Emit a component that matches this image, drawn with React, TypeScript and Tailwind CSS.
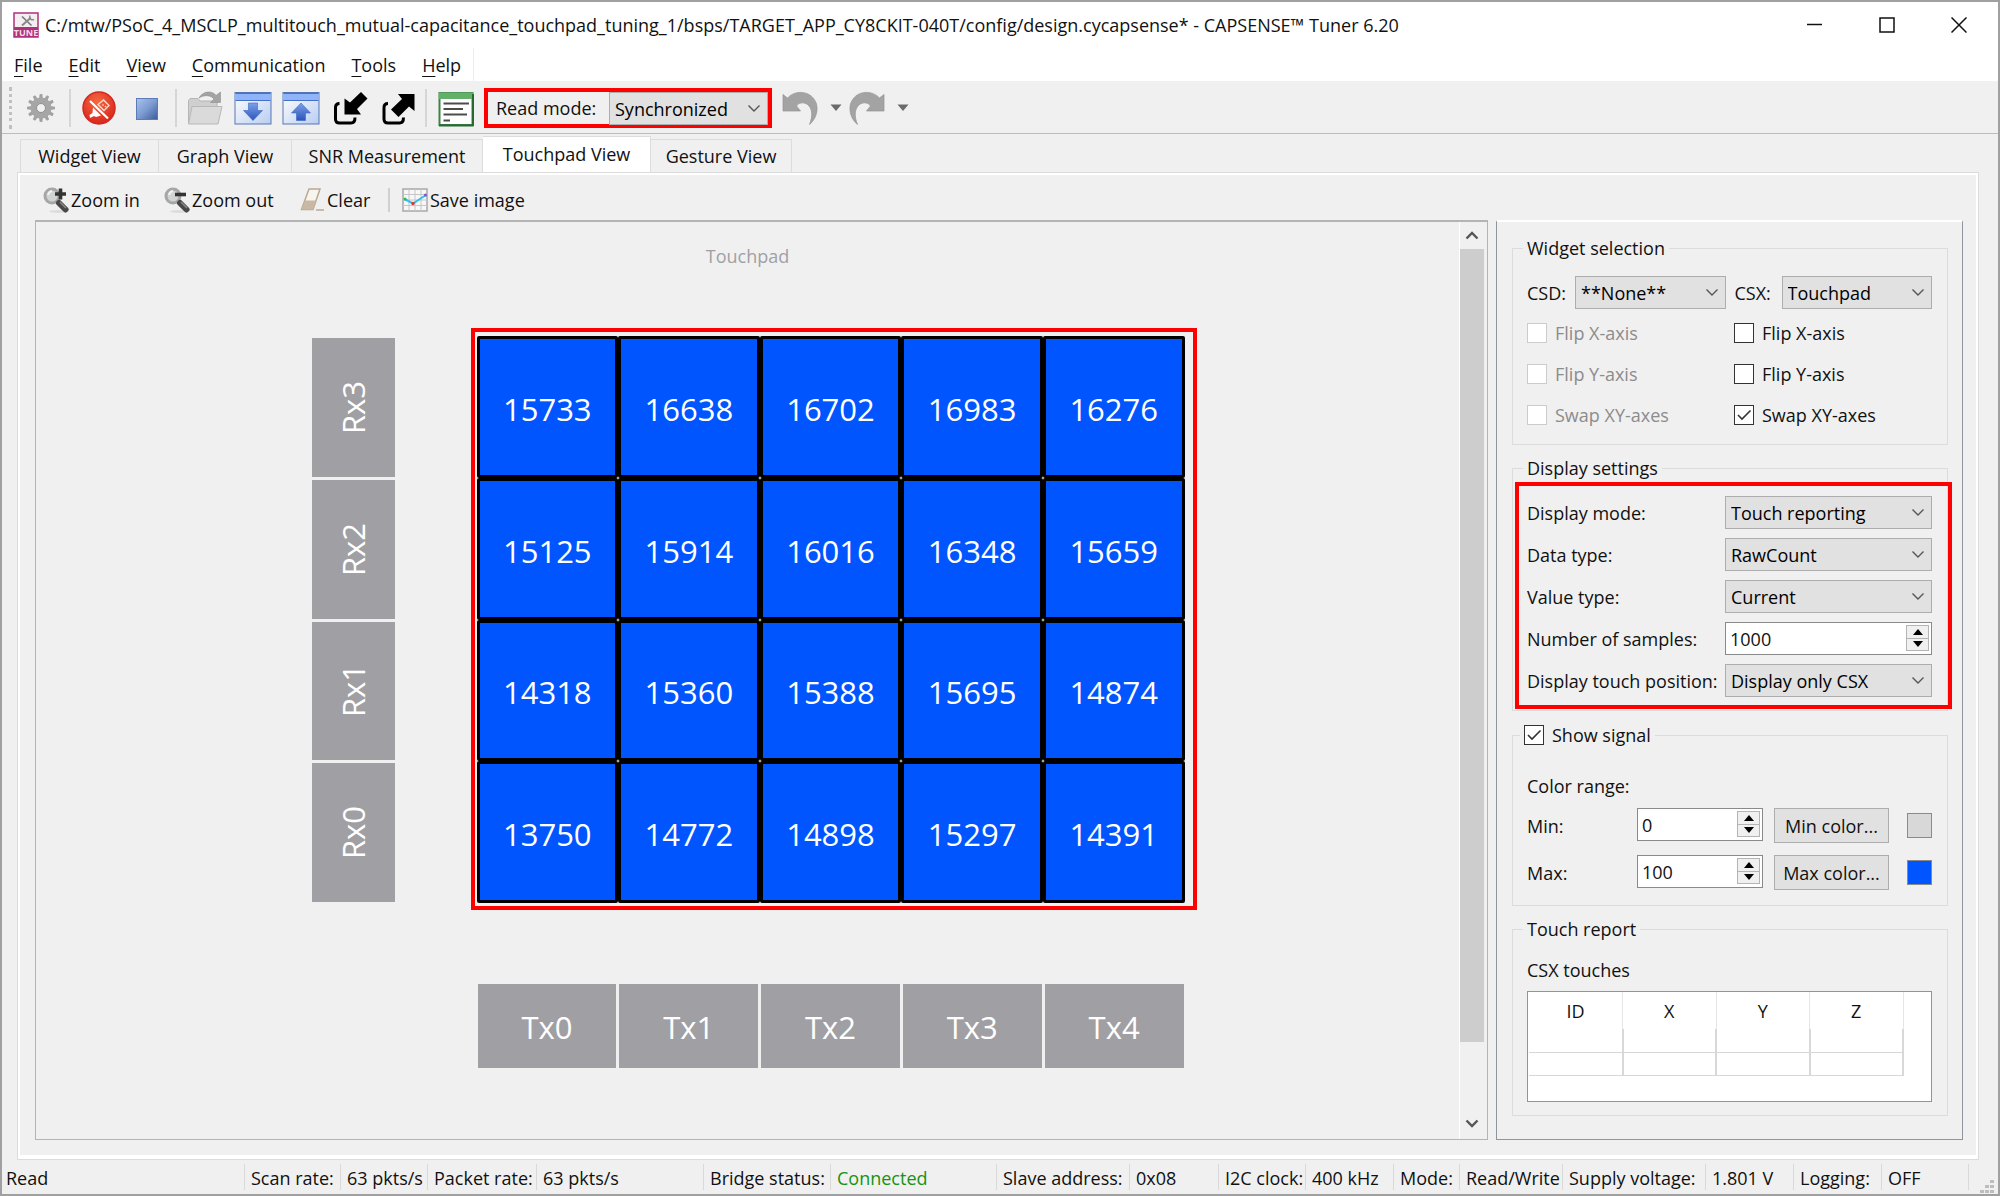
import React from "react";
import { clsx } from "clsx";

const rows = [
  { label: "Rx3", values: [15733, 16638, 16702, 16983, 16276] },
  { label: "Rx2", values: [15125, 15914, 16016, 16348, 15659] },
  { label: "Rx1", values: [14318, 15360, 15388, 15695, 14874] },
  { label: "Rx0", values: [13750, 14772, 14898, 15297, 14391] },
];
const columns = ["Tx0", "Tx1", "Tx2", "Tx3", "Tx4"];

/* ---------- icons ---------- */

function TuneLogo() {
  return (
    <svg width="26" height="26" viewBox="0 0 26 26" aria-hidden="true">
      <rect x="1" y="1" width="24" height="24" fill="#f4eef2" stroke="#b0307c" strokeWidth="1.5" />
      <path d="M9 4.500 18.500 13.500" stroke="#777" strokeWidth="1.600" fill="none" />
      <path d="M17.500 6 9 13.500" stroke="#888" strokeWidth="2" fill="none" />
      <path d="M17 3.500a3 3 0 0 0 4 4" stroke="#888" strokeWidth="1.500" fill="none" />
      <rect x="1" y="15" width="24" height="10" fill="#b0307c" />
      <text x="13" y="23.500" textAnchor="middle" fontSize="9" fontWeight="700" fill="#f6dcea" fontFamily="Open Sans, sans-serif">
        TUNE
      </text>
    </svg>
  );
}

function GearIcon() {
  const teeth = Array.from({ length: 12 }, (_, i) => i * 30);
  return (
    <svg width="38" height="38" viewBox="0 0 38 38" aria-hidden="true">
      <g fill="#a2a2a2">
        {teeth.map((a) => (
          <path key={a} d="M17 10 17.700 5h2.600L21 10z" transform={`rotate(${a} 19 19)`} />
        ))}
      </g>
      <circle cx="19" cy="19" r="7.500" fill="none" stroke="#a6a6a6" strokeWidth="6" />
      <circle cx="19" cy="19" r="4.500" fill="none" stroke="#8f8f8f" strokeWidth="1" />
    </svg>
  );
}

function DisconnectIcon() {
  return (
    <svg width="38" height="38" viewBox="0 0 38 38" aria-hidden="true">
      <defs>
        <radialGradient id="redBall" cx="0.45" cy="0.3" r="0.75">
          <stop offset="0" stopColor="#f4693f" />
          <stop offset="1" stopColor="#d8201a" />
        </radialGradient>
      </defs>
      <circle cx="19" cy="19" r="16" fill="url(#redBall)" stroke="#cf2a1e" strokeWidth="1.500" />
      <path d="M10 12 28 29.500" stroke="#fff" strokeWidth="2.200" />
      <path d="M13 18.500 21 26.500 16 28l-2-1-4 2-.5-3 3-2z" fill="#fff" />
      <path d="M18 15.500 23.500 11 29 16.500 24 21.500z" fill="none" stroke="#ffd5c8" strokeWidth="1.500" />
      <path d="M22.500 15.500l1 1M25 17l1 1" stroke="#ffd5c8" strokeWidth="1.500" />
    </svg>
  );
}

function StopIcon() {
  return (
    <svg width="38" height="38" viewBox="0 0 38 38" aria-hidden="true">
      <defs>
        <linearGradient id="stopFill" x1="0" y1="0" x2="1" y2="1">
          <stop offset="0" stopColor="#a9c3ee" />
          <stop offset="0.5" stopColor="#7c9bd0" />
          <stop offset="1" stopColor="#3b5a9c" />
        </linearGradient>
      </defs>
      <rect x="8.500" y="9.500" width="21" height="21" fill="url(#stopFill)" stroke="#5b7cb8" />
    </svg>
  );
}

function OpenIcon() {
  return (
    <svg width="38" height="38" viewBox="0 0 38 38" aria-hidden="true">
      <path d="M2.500 34V11.500L4 9.500h8l2 2.500h17v6" fill="#cfcfcf" stroke="#b5b5b5" />
      <path d="M2.500 35 6 17.500h30L32 35z" fill="#dadada" stroke="#b8b8b8" />
      <path d="M13 9C17 1.500 27 1.500 30 6.500L34.500 3v10.500H24.500L28 10C25 6 18 5.500 13 9z" fill="#a3a3a3" stroke="#8f8f8f" strokeWidth="0.600" />
    </svg>
  );
}

function TransferIcon({ up }: { up?: boolean }) {
  return (
    <svg width="38" height="38" viewBox="0 0 38 38" aria-hidden="true">
      <defs>
        <linearGradient id="winBody" x1="0" y1="0" x2="1" y2="1">
          <stop offset="0" stopColor="#ffffff" />
          <stop offset="1" stopColor="#b9cdf2" />
        </linearGradient>
        <linearGradient id="arrowFill" x1="0" y1="0" x2="0" y2="1">
          <stop offset="0" stopColor="#7ba0ec" />
          <stop offset="1" stopColor="#2a56b8" />
        </linearGradient>
      </defs>
      <rect x="1" y="3.500" width="36" height="31.500" fill="url(#winBody)" stroke="#5576b8" />
      <rect x="1.500" y="4" width="35" height="7.500" fill="#8fb4fa" />
      <path d="M1.500 4.500h35M1.500 11.500h35" stroke="#4470c8" />
      {up ? (
        <path d="M19 14 28.500 24H23.500V31.500H14.500V24H9.500z" fill="url(#arrowFill)" stroke="#3b66c4" strokeWidth="0.600" />
      ) : (
        <path d="M14.500 14H23.500V21.500H28.500L19 31.500 9.500 21.500H14.500z" fill="url(#arrowFill)" stroke="#3b66c4" strokeWidth="0.600" />
      )}
    </svg>
  );
}

function ImportIcon() {
  return (
    <svg width="38" height="38" viewBox="0 0 38 38" aria-hidden="true">
      <path d="M9.500 14.500Q5.500 14.500 5.500 18.500V30Q5.500 34 9.500 34H21Q25 34 25 28.500" fill="none" stroke="#000" strokeWidth="3" />
      <path d="M31 3 37.500 9.500 27 20 31 25.500H14.500V9.500L20 13.500z" fill="#000" />
    </svg>
  );
}

function ExportIcon() {
  return (
    <svg width="38" height="38" viewBox="0 0 38 38" aria-hidden="true">
      <path d="M10 14.500Q6 14.500 6 18.500V30Q6 34 10 34H21.500Q25.500 34 25.500 28.500" fill="none" stroke="#000" strokeWidth="3" />
      <path d="M20 5H36.500V22L31 17.500 20.500 28 13 20.500 24 10z" fill="#000" />
    </svg>
  );
}

function LogIcon() {
  return (
    <svg width="38" height="38" viewBox="0 0 38 38" aria-hidden="true">
      <rect x="3.500" y="4" width="33" height="32" fill="#fff" stroke="#3c8446" strokeWidth="2" />
      <rect x="3" y="3.500" width="34" height="6.500" fill="#63b06b" />
      <path d="M37 5V37M3 36.500H37.500" stroke="#276b32" strokeWidth="2" />
      <path d="M7.500 14.500H33M7.500 20H27M7.500 25.500H31M7.500 31.500H14" stroke="#4c4c4c" strokeWidth="2" />
    </svg>
  );
}

function UndoIcon({ flip }: { flip?: boolean }) {
  return (
    <svg width="38" height="38" viewBox="0 0 38 38" aria-hidden="true">
      <path
        d="M2 5.500 6.500 9C14 .5 31 1 35.500 15 37.500 23 34 31 28.500 35.500 32 27 31.500 19.500 26.500 15.500 22 12.500 17.500 14 15.500 17L19.500 22H2z"
        fill="#a3a3a3"
        stroke="#949494"
        strokeWidth="0.700"
        transform={flip ? "matrix(-1 0 0 1 38 0)" : undefined}
      />
    </svg>
  );
}

function DropArrow() {
  return (
    <svg width="12" height="8" viewBox="0 0 12 8" aria-hidden="true">
      <path d="M.5.500h11L6 7z" fill="#6b6b6f" />
    </svg>
  );
}

function MagnifierIcon({ plus }: { plus?: boolean }) {
  return (
    <svg width="26" height="28" viewBox="0 0 26 28" aria-hidden="true">
      <ellipse cx="15" cy="25.500" rx="9" ry="1.500" fill="#dcdcdc" />
      <circle cx="9" cy="10" r="7" fill="#d0d3d3" stroke="#a6a6a6" strokeWidth="3" />
      <path d="M5 9a5 5 0 0 1 4-4" stroke="#f3f3f3" strokeWidth="2" fill="none" />
      <path d="M16 17 22.500 23.500" stroke="#484848" strokeWidth="6" strokeLinecap="round" />
      <path d="M17 16 23 22" stroke="#8a8a8a" strokeWidth="1.500" />
      <path d={plus ? "M12 8h11M17.500 2.500v11" : "M11 8.500h11"} stroke="#333" strokeWidth="3.600" />
    </svg>
  );
}

function EraserIcon() {
  return (
    <svg width="26" height="28" viewBox="0 0 26 28" aria-hidden="true">
      <path d="M10 3H21L14 23.500H2.500z" fill="#f8f4ee" stroke="#b9a893" strokeWidth="1.500" />
      <path d="M6 14.500H17L14 23.500H2.500z" fill="#c9b8a4" />
      <path d="M17 24H25" stroke="#c9bba8" strokeWidth="2" />
    </svg>
  );
}

function ChartIcon() {
  return (
    <svg width="26" height="26" viewBox="0 0 26 26" aria-hidden="true">
      <rect x="1" y="2" width="24" height="22" fill="#f7f7f7" stroke="#a8a8a8" strokeWidth="1.500" />
      <path d="M7 2v22M13 2v22M19 2v22M1 7.500h24M1 13h24M1 18.500h24" stroke="#c6c6c6" />
      <path d="M2.500 12 11 16.500 24 8" stroke="#35bdf0" strokeWidth="2" fill="none" />
      <circle cx="3" cy="12" r="1.500" fill="#3bb54a" />
      <circle cx="11" cy="16.500" r="1.700" fill="#e8352a" />
      <circle cx="23.500" cy="8" r="1.500" fill="#8a4bd0" />
    </svg>
  );
}

function Chevron({ up, bold }: { up?: boolean; bold?: boolean }) {
  return (
    <svg width="14" height="9" viewBox="0 0 14 9" aria-hidden="true">
      <path
        d={up ? "M1.500 7.500 7 2 12.500 7.500" : "M1.500 1.500 7 7 12.500 1.500"}
        fill="none"
        stroke="#555"
        strokeWidth={bold ? 2.4 : 1.4}
      />
    </svg>
  );
}

/* ---------- controls ---------- */

function Select({ label, value, className }: { label: string; value: string; className?: string }) {
  return (
    <div className={clsx("relative min-w-0", className)}>
      <select
        aria-label={label}
        defaultValue={value}
        className="block h-[33px] w-full appearance-none border border-[#adadad] bg-[#e1e1e1] pr-6 pl-[5px] leading-6 text-black outline-none"
      >
        <option>{value}</option>
      </select>
      <span className="pointer-events-none absolute inset-y-0 right-[7px] flex items-center">
        <Chevron />
      </span>
    </div>
  );
}

function SpinBox({ label, value, className }: { label: string; value: string; className?: string }) {
  return (
    <div className={clsx("flex h-[33px] min-w-0 border border-[#8a8a8a] bg-white", className)}>
      <input aria-label={label} defaultValue={value} className="min-w-0 flex-1 bg-transparent pl-1 outline-none" />
      <div className="mt-0.5 mr-0.5 flex h-[26px] w-[23px] shrink-0 flex-col border border-[#b4b4b4] bg-[#f0f0f0]">
        <button aria-label={`Increase ${label}`} className="flex flex-1 items-center justify-center border-b border-[#b4b4b4]">
          <svg width="10" height="6" viewBox="0 0 10 6"><path d="M0 6 5 0 10 6z" /></svg>
        </button>
        <button aria-label={`Decrease ${label}`} className="flex flex-1 items-center justify-center">
          <svg width="10" height="6" viewBox="0 0 10 6"><path d="M0 0 5 6 10 0z" /></svg>
        </button>
      </div>
    </div>
  );
}

function Check({ label, checked, disabled }: { label: string; checked?: boolean; disabled?: boolean }) {
  return (
    <label className={clsx("flex items-center gap-2", disabled && "text-[#8c8c8c]")}>
      <span className="grid size-5">
        <input
          type="checkbox"
          defaultChecked={checked}
          disabled={disabled}
          className="peer col-start-1 row-start-1 size-5 appearance-none border border-[#333] bg-white disabled:border-[#cccccc]"
        />
        <svg
          viewBox="0 0 20 20"
          className="pointer-events-none invisible col-start-1 row-start-1 size-5 peer-checked:visible"
          aria-hidden="true"
        >
          <path d="M4 10 8 14 16.500 5.500" fill="none" stroke="#333" strokeWidth="1.600" />
        </svg>
      </span>
      {label}
    </label>
  );
}

function Group({ title, className, children }: { title: React.ReactNode; className?: string; children: React.ReactNode }) {
  return (
    <fieldset className={clsx("min-w-0 border border-[#dcdcdc] pr-[15px] pl-[14px]", className)}>
      <legend className={clsx("px-1", typeof title === "string" ? "-ml-1" : "-ml-[7px]")}>{title}</legend>
      {children}
    </fieldset>
  );
}

function ToolButton({ label, children }: { label: string; children: React.ReactNode }) {
  return (
    <button aria-label={label} className="flex h-[46px] w-12 shrink-0 items-center justify-center">
      {children}
    </button>
  );
}

function ToolSeparator() {
  return (
    <div className="flex w-[10px] shrink-0 justify-center">
      <div className="h-[38px] w-0.5 bg-[#d6d6d6]" />
    </div>
  );
}

/* ---------- window parts ---------- */

function TitleBar() {
  return (
    <header className="flex h-[46px] items-center bg-white pr-[3px] pl-[11px]">
      <TuneLogo />
      <h1 className="ml-1.5 min-w-0 flex-1 truncate">
        C:/mtw/PSoC_4_MSCLP_multitouch_mutual-capacitance_touchpad_tuning_1/bsps/TARGET_APP_CY8CKIT-040T/config/design.cycapsense* - CAPSENSE™ Tuner 6.20
      </h1>
      <button aria-label="Minimize" className="flex h-full w-[72px] items-center justify-center">
        <svg width="16" height="16" viewBox="0 0 16 16"><path d="M0 7.500h15" stroke="#111" strokeWidth="1.500" /></svg>
      </button>
      <button aria-label="Maximize" className="flex h-full w-[72px] items-center justify-center">
        <svg width="16" height="16" viewBox="0 0 16 16"><path d="M1 1h14v14H1z" fill="none" stroke="#111" strokeWidth="1.500" /></svg>
      </button>
      <button aria-label="Close" className="flex h-full w-[72px] items-center justify-center">
        <svg width="16" height="16" viewBox="0 0 16 16"><path d="M.5.500l15 15M15.500.500l-15 15" stroke="#111" strokeWidth="1.500" /></svg>
      </button>
    </header>
  );
}

function MenuBar() {
  return (
    <nav className="flex h-[33px] bg-white">
      <div className="flex items-center gap-[26px] border-r border-[#ececec] px-3">
        {["File", "Edit", "View", "Communication", "Tools", "Help"].map((m) => (
          <button key={m}>
            <span className="underline underline-offset-4">{m[0]}</span>
            {m.slice(1)}
          </button>
        ))}
      </div>
    </nav>
  );
}

function MainToolbar() {
  return (
    <div className="flex h-[53px] items-center border-b border-[#bdbdbd] pt-0.5 pl-[7px]">
      <div className="mr-[5px] h-[42px] w-[3px] border-l-[3px] border-dotted border-[#c0c0c0]" />
      <ToolButton label="Settings"><GearIcon /></ToolButton>
      <ToolSeparator />
      <ToolButton label="Disconnect"><DisconnectIcon /></ToolButton>
      <ToolButton label="Stop"><StopIcon /></ToolButton>
      <ToolSeparator />
      <ToolButton label="Open"><OpenIcon /></ToolButton>
      <ToolButton label="Apply to device"><TransferIcon /></ToolButton>
      <ToolButton label="Apply to project"><TransferIcon up /></ToolButton>
      <ToolButton label="Import"><ImportIcon /></ToolButton>
      <ToolButton label="Export"><ExportIcon /></ToolButton>
      <ToolSeparator />
      <ToolButton label="Log"><LogIcon /></ToolButton>
      <div className="ml-[5px] flex h-10 w-[288px] items-stretch border-4 border-[#ff0000]">
        <span className="flex w-[121px] shrink-0 items-center pl-2 whitespace-nowrap">Read mode:</span>
        <Select label="Read mode" value="Synchronized" className="flex-1" />
      </div>
      <button aria-label="Undo" className="ml-[9px]"><UndoIcon /></button>
      <button aria-label="Undo history" className="ml-[11px]"><DropArrow /></button>
      <button aria-label="Redo" className="ml-1.5"><UndoIcon flip /></button>
      <button aria-label="Redo history" className="ml-[11px]"><DropArrow /></button>
    </div>
  );
}

const tabs = [
  { name: "Widget View", width: "w-[139px]" },
  { name: "Graph View", width: "w-[133px]" },
  { name: "SNR Measurement", width: "w-[191px]" },
  { name: "Touchpad View", width: "w-[168px]", active: true },
  { name: "Gesture View", width: "w-[141px]" },
];

function Tabs() {
  return (
    <div role="tablist" className="mt-0.5 flex h-[36px] items-end pl-[18px]">
      {tabs.map((t) => (
        <button
          key={t.name}
          role="tab"
          aria-selected={!!t.active}
          className={clsx(
            "shrink-0 border-t border-r border-[#dcdcdc] whitespace-nowrap",
            t.width,
            t.active ? "h-9 bg-white pb-px" : "h-[33px] first:border-l",
          )}
        >
          {t.name}
        </button>
      ))}
    </div>
  );
}

function ViewToolbar() {
  return (
    <div className="flex h-[45px] items-center pt-1 pl-[23px]">
      <button className="flex w-[121px] items-center gap-0.5"><MagnifierIcon plus />Zoom in</button>
      <button className="flex w-[135px] items-center gap-0.5"><MagnifierIcon />Zoom out</button>
      <button className="flex w-[89px] items-center gap-0.5"><EraserIcon />Clear</button>
      <div className="mr-3 h-6 w-0.5 bg-[#d0d0d0]" />
      <button className="flex items-center gap-0.5"><ChartIcon />Save image</button>
    </div>
  );
}

function Diagram() {
  return (
    <div className="flex flex-1 flex-col items-center pt-[22px]">
      <h2 className="text-[#a0a0a4]">Touchpad</h2>
      <div className="mt-[60px] grid grid-cols-[83px_706px] gap-x-[83px]">
        <div className="mt-[10px] grid h-[564px] grid-rows-4 gap-[3px]">
          {rows.map((r) => (
            <div key={r.label} className="flex items-center justify-center bg-[#a0a0a4] text-[31px] text-white">
              <span className="rotate-180 [writing-mode:vertical-rl]">{r.label}</span>
            </div>
          ))}
        </div>
        <div className="-mr-[13px] -ml-[7px] h-[582px] border-4 border-[#ff0000] pt-1 pr-2 pb-[3px] pl-0.5">
          <div className="grid h-full grid-cols-5 grid-rows-4">
            {rows.flatMap((r) =>
              r.values.map((v, i) => (
                <div
                  key={r.label + i}
                  className="flex items-center justify-center rounded-xs border-[3px] border-black bg-[#0055ff] pt-1 text-[31px] text-white"
                >
                  {v}
                </div>
              )),
            )}
          </div>
        </div>
        <div className="col-start-2 mt-[74px] grid h-[84px] grid-cols-5 gap-[3px]">
          {columns.map((c) => (
            <div key={c} className="flex items-center justify-center bg-[#a0a0a4] pt-0.5 text-[31px] text-white">
              {c}
            </div>
          ))}
        </div>
      </div>
    </div>
  );
}

function Canvas() {
  return (
    <section className="flex min-w-0 flex-1 border border-t-2 border-[#b4b4b4]">
      <Diagram />
      <div className="mr-[3px] flex w-[25px] flex-col border-l border-white">
        <button aria-label="Scroll up" className="flex h-[27px] items-center justify-center"><Chevron up bold /></button>
        <div className="flex-[794] bg-[#cdcdcd]" />
        <div className="flex-[66]" />
        <button aria-label="Scroll down" className="flex h-[31px] items-center justify-center"><Chevron bold /></button>
      </div>
    </section>
  );
}

function SidePanel() {
  return (
    <aside className="w-[467px] shrink-0 border border-t-2 border-[#8f959e] border-t-white pt-3.5 pr-[14px] pb-5 pl-[15px]">
      <Group title="Widget selection" className="pt-4 pb-[17px]">
        <div className="flex items-center">
          <span className="w-12">CSD:</span>
          <Select label="CSD" value="**None**" className="flex-1" />
          <span className="ml-[9px] w-[47px]">CSX:</span>
          <Select label="CSX" value="Touchpad" className="flex-1" />
        </div>
        <div className="mt-3 grid grid-cols-[207px_1fr] gap-y-[17px]">
          {["Flip X-axis", "Flip Y-axis", "Swap XY-axes"].map((l) => (
            <React.Fragment key={l}>
              <Check label={l} disabled />
              <Check label={l} checked={l === "Swap XY-axes"} />
            </React.Fragment>
          ))}
        </div>
      </Group>

      <Group title="Display settings" className="mt-[11px] pt-4 pb-[13px]">
        <div className="relative grid grid-cols-[198px_minmax(0,1fr)] items-center gap-y-[9px]">
          <span>Display mode:</span>
          <Select label="Display mode" value="Touch reporting" />
          <span>Data type:</span>
          <Select label="Data type" value="RawCount" />
          <span>Value type:</span>
          <Select label="Value type" value="Current" />
          <span>Number of samples:</span>
          <SpinBox label="Number of samples" value="1000" />
          <span className="whitespace-nowrap">Display touch position:</span>
          <Select label="Display touch position" value="Display only CSX" />
          <div className="pointer-events-none absolute -top-3.5 -right-5 -bottom-3 -left-3 border-4 border-[#ff0000]" />
        </div>
      </Group>

      <Group title={<Check label="Show signal" checked />} className="mt-3 pt-[27px] pb-[15px]">
        <p>Color range:</p>
        <div className="mt-[10px] flex flex-col gap-3">
          {[
            { name: "Min", value: "0", swatch: "bg-[#d8d8d8]" },
            { name: "Max", value: "100", swatch: "bg-[#0055ff]" },
          ].map((r) => (
            <div key={r.name} className="flex items-start">
              <span className="mt-1.5 w-[110px]">{r.name}:</span>
              <SpinBox label={r.name} value={r.value} className="flex-1" />
              <button className="ml-[11px] h-[35px] w-[115px] border border-[#adadad] bg-[#e1e1e1] whitespace-nowrap">
                {r.name} color...
              </button>
              <span className={clsx("mt-[5px] ml-[18px] size-[25px] border border-[#8a8a8a]", r.swatch)} />
            </div>
          ))}
        </div>
      </Group>

      <Group title="Touch report" className="mt-[11px] pt-[17px] pb-[13px]">
        <p>CSX touches</p>
        <div className="mt-[9px] h-[111px] border border-[#8f959e] bg-white pl-px">
          <table className="w-[375px] table-fixed border-collapse">
            <thead>
              <tr className="h-[37px]">
                {["ID", "X", "Y", "Z"].map((h) => (
                  <th key={h} className="border-r border-[#e5e5e5] font-normal">{h}</th>
                ))}
              </tr>
            </thead>
            <tbody>
              {[0, 1].map((r) => (
                <tr key={r} className="h-[23px]">
                  {[0, 1, 2, 3].map((c) => (
                    <td key={c} className="border-r-2 border-b border-[#d8d8d8]" />
                  ))}
                </tr>
              ))}
            </tbody>
          </table>
        </div>
      </Group>
    </aside>
  );
}

const status = [
  "Read", "Scan rate:", "63 pkts/s", "Packet rate:", "63 pkts/s", "Bridge status:", "Connected", "Slave address:",
  "0x08", "I2C clock:", "400 kHz", "Mode:", "Read/Write", "Supply voltage:", "1.801 V", "Logging:", "OFF",
];

function StatusBar() {
  return (
    <footer className="grid h-[34px] grid-cols-[243fr_96fr_87fr_109fr_167fr_127fr_166fr_133fr_89fr_87fr_88fr_66fr_103fr_143fr_88fr_88fr_87fr_29fr] items-center">
      {status.map((s, i) => (
        <div
          key={i}
          className={clsx(
            "flex h-[26px] min-w-0 items-center border-r border-[#d9d9d9] pt-0.5 pl-1.5 whitespace-nowrap first:pl-1",
            s === "Connected" && "text-[#149414]",
          )}
        >
          {s}
        </div>
      ))}
      <svg width="14" height="14" viewBox="0 0 14 14" className="mr-1 self-end justify-self-end" aria-hidden="true">
        <path d="M10 0h4v3h-4zM5 5h4v3H5zM10 5h4v3h-4zM0 10h4v3H0zM5 10h4v3H5zM10 10h4v3h-4z" fill="#bdbdbd" />
      </svg>
    </footer>
  );
}

export default function App() {
  return (
    <div className="flex min-h-screen flex-col border-2 border-[#a0a0a0] bg-[#f0f0f0] font-['Open_Sans','Noto_Sans',sans-serif] text-lg leading-6 text-[#111]">
      <TitleBar />
      <MenuBar />
      <MainToolbar />
      <Tabs />
      <main className="mr-[19px] ml-[15px] flex flex-1 flex-col border border-[#dcdcdc]">
        <div className="flex flex-1 flex-col border-2 border-b-4 border-white">
          <ViewToolbar />
          <div className="mr-[13px] mb-[15px] ml-[15px] flex flex-1 gap-2">
            <Canvas />
            <SidePanel />
          </div>
        </div>
      </main>
      <StatusBar />
    </div>
  );
}
